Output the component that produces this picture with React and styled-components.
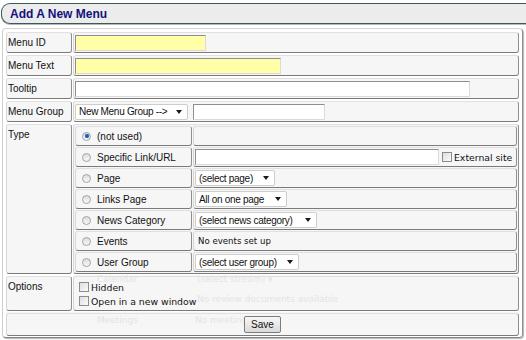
import React from 'react';
import styled, { createGlobalStyle } from 'styled-components';

const GlobalStyle = createGlobalStyle`
  body {
    margin: 0;
    background: #fff;
    font-family: "Liberation Sans", Arial, sans-serif;
    color: #111;
  }
`;

const Page = styled.div`
  width: 526px;
  height: 340px;
  overflow: hidden;
`;

const Header = styled.h1`
  box-sizing: border-box;
  margin: 3px 0 0 1px;
  height: 21px;
  padding-left: 8px;
  display: flex;
  align-items: center;
  background: #ececec;
  border: 1px solid #355b5b;
  border-right: none;
  border-radius: 9px 0 0 9px;
  box-shadow: 0 1px 0 #b9b9b9;
  font: bold 12px "Liberation Sans", Arial, sans-serif;
  color: #12127c;
`;

const Panel = styled.div`
  position: relative;
  box-sizing: border-box;
  width: 521px;
  margin: 4px 0 0 2px;
  padding: 3px 3px 1px 3px;
  border: 1px solid;
  border-color: #d4d4d4 #8e8e8e #858585 #cfcfcf;
  border-radius: 4px;
  box-shadow: 1px 1px 1px #b5b5b5;
  display: flex;
  flex-direction: column;
  gap: 2px;
`;

const Row = styled.div`
  display: grid;
  grid-template-columns: ${p => (p.$full ? '1fr' : '66px 1fr')};
  column-gap: 1px;
  height: ${p => p.$h}px;
`;

const Cell = styled.div`
  box-sizing: border-box;
  background: #f6f6f6;
  border: 1px solid;
  border-color: #e0e0e0 #8f8f8f #7a7a7a #d6d6d6;
  border-radius: 3px;
  display: flex;
  align-items: center;
  justify-content: ${p => (p.$center ? 'center' : 'flex-start')};
  padding: 0 1px;
  gap: ${p => p.$gap || 0}px;
`;

const Label = styled(Cell)`
  align-items: ${p => (p.$top ? 'flex-start' : 'center')};
  padding: ${p => (p.$top ? '3px 1px 0' : '0 1px')};
  font-size: 10px;
  line-height: 14px;
`;

const TypeCell = styled(Cell)`
  padding: 1px;
  align-items: stretch;
`;

const TypeGrid = styled.div`
  flex: 1;
  display: grid;
  grid-template-columns: 117px 1fr;
  grid-auto-rows: 20px;
  gap: 1px;
`;

const RadioCell = styled(Cell)`
  padding-left: 6px;
  gap: 6px;
  font-size: 10px;
`;

const Radio = styled.span`
  position: relative;
  box-sizing: border-box;
  width: 9px;
  height: 9px;
  border-radius: 50%;
  border: 1px solid #a3a3a3;
  background: linear-gradient(#dcdcdc, #f8f8f8);
  &::after {
    content: '';
    display: ${p => (p.$on ? 'block' : 'none')};
    position: absolute;
    left: 1.5px;
    top: 1.5px;
    width: 4px;
    height: 4px;
    border-radius: 50%;
    background: #1d5fb4;
    box-shadow: 0 0 1px #6aa3e0;
  }
`;

const TextInput = styled.input`
  box-sizing: border-box;
  width: ${p => p.$w}px;
  height: 16px;
  margin: 0;
  padding: 0 2px;
  background: ${p => (p.$req ? '#ffffa8' : '#fff')};
  border: 1px solid;
  border-color: #8e8e8e #dadada #dadada #8e8e8e;
  font: 10px "Liberation Sans", Arial, sans-serif;
  outline: none;
`;

const Select = styled.div`
  box-sizing: border-box;
  width: ${p => p.$w}px;
  height: 16px;
  display: flex;
  align-items: center;
  justify-content: space-between;
  padding: 0 5px 0 3px;
  background: #fff;
  border: 1px solid #cdcdcd;
  border-radius: 2px;
  font-size: 10px;
  letter-spacing: -0.3px;
  white-space: nowrap;
`;

const Caret = styled.span`
  width: 0;
  height: 0;
  border-left: 3px solid transparent;
  border-right: 3px solid transparent;
  border-top: 4px solid #1a1a1a;
`;

const Check = styled.span`
  box-sizing: border-box;
  flex: none;
  width: 10px;
  height: 10px;
  border: 1px solid #8c8c8c;
  background: linear-gradient(135deg, #dedede, #fbfbfb);
`;

const CheckLabel = styled.label`
  display: flex;
  align-items: center;
  gap: 2px;
  height: 14px;
  margin-left: ${p => p.$ml || 0}px;
  font: 9.3px "DejaVu Sans", Verdana, sans-serif;
  white-space: nowrap;
`;

const Note = styled.span`
  padding-left: 3px;
  font: 8.6px "DejaVu Sans", Verdana, sans-serif;
`;

const OptionsCell = styled(Cell)`
  position: relative;
  z-index: 2;
  background: transparent;
  flex-direction: column;
  align-items: flex-start;
  justify-content: flex-start;
  padding: 3px 5px 0;
`;

const SaveCell = styled(Cell)`
  position: relative;
  z-index: 2;
  background: transparent;
`;

const Button = styled.button`
  box-sizing: border-box;
  height: 17px;
  margin: 0;
  padding: 0 6px;
  background: linear-gradient(#f7f7f7, #dadada);
  border: 1px solid #7c7c7c;
  border-radius: 2px;
  font: 10px "Liberation Sans", Arial, sans-serif;
  color: #111;
`;

/* faint leftover text seen behind the options and save rows */
const GhostLayer = styled.div`
  position: absolute;
  inset: 0;
  z-index: 1;
  pointer-events: none;
  background:
    linear-gradient(#f6f6f6, #f6f6f6) 70px 246px / 446px 35px no-repeat,
    linear-gradient(#f6f6f6, #f6f6f6) 3px 283px / 513px 23px no-repeat;
`;

const Ghost = styled.span`
  position: absolute;
  left: ${p => p.$x}px;
  top: ${p => p.$y}px;
  font: 9px "DejaVu Sans", Verdana, sans-serif;
  color: #e4e4e4;
  white-space: nowrap;
`;

const typeRows = [
  { label: '(not used)', on: true },
  { label: 'Specific Link/URL', kind: 'url' },
  { label: 'Page', select: '(select page)', w: 80 },
  { label: 'Links Page', select: 'All on one page', w: 92 },
  { label: 'News Category', select: '(select news category)', w: 122 },
  { label: 'Events', note: 'No events set up' },
  { label: 'User Group', select: '(select user group)', w: 104 },
];

const TypeValue = ({ row }) => {
  if (row.kind === 'url') {
    return (
      <Cell>
        <TextInput $w={244} />
        <CheckLabel $ml={3}>
          <Check />
          External site
        </CheckLabel>
      </Cell>
    );
  }
  if (row.select) {
    return (
      <Cell>
        <Select $w={row.w}>
          {row.select}
          <Caret />
        </Select>
      </Cell>
    );
  }
  return <Cell>{row.note && <Note>{row.note}</Note>}</Cell>;
};

const App = () => {
  return (
    <Page>
      <GlobalStyle />
      <Header>Add A New Menu</Header>
      <Panel>
        <Row $h={21}>
          <Label>Menu ID</Label>
          <Cell>
            <TextInput $w={131} $req />
          </Cell>
        </Row>
        <Row $h={21}>
          <Label>Menu Text</Label>
          <Cell>
            <TextInput $w={206} $req />
          </Cell>
        </Row>
        <Row $h={21}>
          <Label>Tooltip</Label>
          <Cell>
            <TextInput $w={395} />
          </Cell>
        </Row>
        <Row $h={21}>
          <Label>Menu Group</Label>
          <Cell $gap={5}>
            <Select $w={113}>
              New Menu Group --&gt;
              <Caret />
            </Select>
            <TextInput $w={132} />
          </Cell>
        </Row>
        <Row $h={150}>
          <Label $top>Type</Label>
          <TypeCell>
            <TypeGrid>
              {typeRows.map(row => (
                <React.Fragment key={row.label}>
                  <RadioCell>
                    <Radio $on={row.on} />
                    {row.label}
                  </RadioCell>
                  <TypeValue row={row} />
                </React.Fragment>
              ))}
            </TypeGrid>
          </TypeCell>
        </Row>
        <Row $h={35}>
          <Label $top>Options</Label>
          <OptionsCell>
            <CheckLabel>
              <Check />
              Hidden
            </CheckLabel>
            <CheckLabel>
              <Check />
              Open in a new window
            </CheckLabel>
          </OptionsCell>
        </Row>
        <Row $h={23} $full>
          <SaveCell $center>
            <Button>Save</Button>
          </SaveCell>
        </Row>
        <GhostLayer>
          <Ghost $x={94} $y={245}>Calendar</Ghost>
          <Ghost $x={194} $y={245}>(select stream) ▾</Ghost>
          <Ghost $x={194} $y={265}>No review documents available</Ghost>
          <Ghost $x={94} $y={286}>Meetings</Ghost>
          <Ghost $x={192} $y={286}>No meetings</Ghost>
        </GhostLayer>
      </Panel>
    </Page>
  );
};

export default App;
